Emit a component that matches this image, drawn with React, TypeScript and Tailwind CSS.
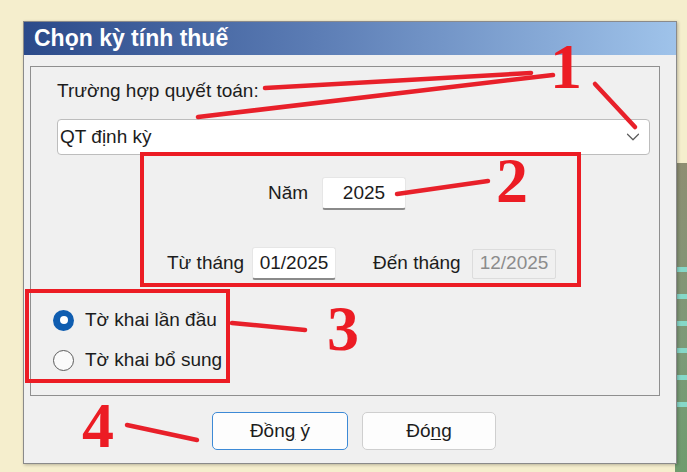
import { ChevronDown } from 'lucide-react';

const sans = 'font-["Liberation_Sans",Arial,sans-serif]';
const redNum = 'absolute font-["Liberation_Serif","Times_New_Roman",serif] font-bold text-[64px] leading-none text-[#ec1c24]';

function Field({ value, disabled }: { value: string; disabled?: boolean }) {
	if (disabled) {
		return (
			<div className="flex h-[30px] w-[84px] items-center justify-center rounded-[2px] border border-[#dcdcdc] bg-[#f0f0f0] text-[#8c8c8c]">
				{value}
			</div>
		);
	}
	return (
		<div className="flex h-[33px] w-[84px] items-center justify-center rounded-[3px] border border-[#e6e6e6] border-b-2 border-b-[#8a8a8a] bg-white">
			{value}
		</div>
	);
}

function Radio({ checked, label }: { checked?: boolean; label: string }) {
	return (
		<div className="flex h-[24px] items-center gap-[11px]">
			{checked ? (
				<div className="flex h-[21px] w-[21px] items-center justify-center rounded-full bg-[#0f5db0]">
					<div className="h-[8px] w-[8px] rounded-full bg-white" />
				</div>
			) : (
				<div className="h-[21px] w-[21px] rounded-full border-[1.5px] border-[#5c5c5c] bg-[#fafafa]" />
			)}
			<span>{label}</span>
		</div>
	);
}

export default function App() {
	return (
		<div className={`relative h-[472px] w-[687px] overflow-hidden bg-[#f5eecd] pl-[23px] pt-[21px] ${sans} text-[19px] text-[#1c1c1c]`}>
			{/* background on the right side */}
			<div className="absolute right-0 top-[163px] bottom-0 w-[12px] bg-[linear-gradient(to_bottom,#8e8e72,#7d9a78_60%,#6f9c6e)]">
				<div className="mt-[82px] h-[170px] bg-[repeating-linear-gradient(to_bottom,transparent_0px,transparent_22px,#86d8c8_22px,#86d8c8_27px)]" />
			</div>

			<div className="relative flex h-[443px] w-[654px] flex-col border border-[#8a8a8a] bg-[#f0f0f0] shadow-[1px_1px_3px_rgba(0,0,0,0.25)]">
				<div className="flex h-[33px] items-center bg-[linear-gradient(to_right,#2b4a8a,#5c7db5_45%,#9fc3ea)] pl-[10px]">
					<span className="text-[23px] font-bold text-white">Chọn kỳ tính thuế</span>
				</div>

				<div className="ml-[6px] mt-[11px] flex h-[330px] w-[630px] flex-col border border-[#8f8f8f]">
					<div className="ml-[26px] mt-[13px] h-[22px] leading-[22px]">Trường hợp quyết toán:</div>
					<div className="ml-[26px] mt-[17px] flex h-[36px] w-[593px] items-center justify-between rounded-[4px] border border-[#bdbdbd] bg-white pl-[2px] pr-[5px]">
						<span>QT định kỳ</span>
						<ChevronDown size={22} strokeWidth={1.3} className="text-[#5a5a5a]" />
					</div>

					<div className="ml-[237px] mt-[22px] flex items-center">
						<span className="w-[54px]">Năm</span>
						<Field value="2025" />
					</div>

					<div className="ml-[136px] mt-[37px] flex items-center">
						<span className="w-[85px]">Từ tháng</span>
						<Field value="01/2025" />
						<span className="ml-[37px] w-[99px]">Đến tháng</span>
						<Field value="12/2025" disabled />
					</div>

					<div className="ml-[22px] mt-[28px] flex flex-col gap-[16px]">
						<Radio checked label="Tờ khai lần đầu" />
						<Radio label="Tờ khai bổ sung" />
					</div>
				</div>

				<div className="ml-[188px] mt-[16px] flex gap-[14px]">
					<button className="flex h-[38px] w-[136px] items-center justify-center rounded-[5px] border-[1.5px] border-[#3d8ad6] bg-[#fdfdfd]">
						<span>
							Đồn<span className="underline underline-offset-2">g</span> ý
						</span>
					</button>
					<button className="flex h-[38px] w-[134px] items-center justify-center rounded-[5px] border border-[#cfcfcf] bg-[#fdfdfd]">
						<span>
							Đó<span className="underline underline-offset-2">n</span>g
						</span>
					</button>
				</div>
			</div>

			{/* annotations */}
			<div className="absolute left-[140px] top-[152px] h-[135px] w-[441px] border-4 border-[#ec1c24]" />
			<div className="absolute left-[25px] top-[289px] h-[94px] w-[205px] border-4 border-[#ec1c24]" />
			<svg className="pointer-events-none absolute inset-0" width="687" height="472">
				<g stroke="#e8202a" strokeWidth="4.5" strokeLinecap="round" fill="none">
					<line x1="265" y1="88" x2="531" y2="73" />
					<line x1="198" y1="117" x2="553" y2="75" />
					<line x1="595" y1="84" x2="635" y2="127" />
					<line x1="397" y1="194" x2="488" y2="181" />
					<line x1="232" y1="323" x2="305" y2="330" />
					<line x1="127" y1="425" x2="197" y2="440" />
				</g>
			</svg>
			<div className={`${redNum} left-[550px] top-[35px]`}>1</div>
			<div className={`${redNum} left-[496px] top-[149px]`}>2</div>
			<div className={`${redNum} left-[327px] top-[297px]`}>3</div>
			<div className={`${redNum} left-[82px] top-[394px]`}>4</div>
		</div>
	);
}
